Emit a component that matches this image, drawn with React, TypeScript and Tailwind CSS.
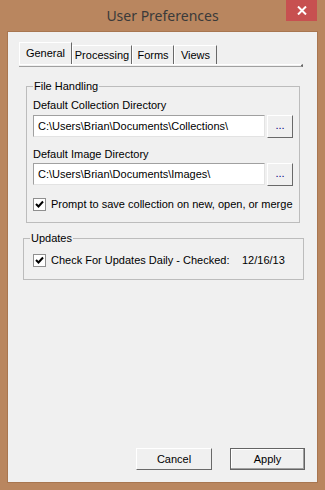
import React from "react";

const ui = { fontFamily: '"Liberation Sans", Arial, sans-serif' };

function CheckBox() {
  return (
    <div className="w-[13px] h-[13px] border border-[#8f8f8f] bg-white flex items-center justify-center shrink-0">
      <svg width="9" height="9" viewBox="0 0 9 9">
        <path d="M1 4 L3.5 6.5 L8 1.5" stroke="#000" strokeWidth="2" fill="none" />
      </svg>
    </div>
  );
}

function PathBox({ value }: { value: string }) {
  return (
    <div className="flex gap-[2px] items-start">
      <div className="w-[232px] h-[22px] bg-white border border-t-[#a0a0a0] border-l-[#a0a0a0] border-b-[#e3e3e3] border-r-[#e3e3e3] flex items-center pl-[4px] text-[11px] text-black">
        {value}
      </div>
      <button className="w-[26px] h-[23px] bg-[#f0f0f0] border border-t-white border-l-white border-b-[#696969] border-r-[#696969] text-[11px] leading-none pb-[2px] text-[#000080]">
        ...
      </button>
    </div>
  );
}

export default function App() {
  const tabs = [
    { name: "General", w: "w-[53px]", active: true },
    { name: "Processing", w: "w-[60px]" },
    { name: "Forms", w: "w-[42px]" },
    { name: "Views", w: "w-[43px]" },
  ];

  return (
    <div className="w-[325px] h-[490px] bg-[#b9865f] flex flex-col" style={ui}>
      {/* title bar */}
      <div className="h-[31px] grid grid-cols-[1fr_auto_1fr] shrink-0">
        <div />
        <div
          className="text-[14px] text-[#3a3a3a] pt-[5px]"
          style={{ fontFamily: '"Noto Sans", "Open Sans", sans-serif' }}
        >
          User Preferences
        </div>
        <div className="flex justify-end pr-[8px]">
          <div className="w-[31px] h-[21px] bg-[#c75050] flex items-center justify-center">
            <svg width="10" height="9" viewBox="0 0 10 9">
              <path d="M1 0.5 L9 8.5 M9 0.5 L1 8.5" stroke="#fff" strokeWidth="2" />
            </svg>
          </div>
        </div>
      </div>

      {/* client area */}
      <div className="flex-1 mx-[7px] mb-[7px] border border-[#a87650] bg-[#f0f0f0] flex flex-col text-[11px] text-black">
        {/* tabs */}
        <div className="ml-[11px] mt-[10px] flex items-end h-[22px]">
          {tabs.map((t) => (
            <div
              key={t.name}
              className={`${t.w} ${
                t.active ? "h-[22px] pt-[3px]" : "h-[19px] pt-[2px]"
              } border-t border-l border-r border-t-white border-l-white border-r-[#696969] bg-[#f0f0f0] text-center leading-[14px]`}
            >
              {t.name}
            </div>
          ))}
        </div>
        <div className="ml-[11px] w-[284px] h-[3px] border-t border-t-white border-b border-b-[#a0a0a0] border-r-2 border-r-[#696969]" />

        {/* file handling */}
        <fieldset className="ml-[18px] mt-[13px] w-[274px] border border-[#bcbcbc] pl-[6px] pr-[6px] pb-[11px]">
          <legend className="px-[1px] leading-[13px]">File Handling</legend>
          <div className="mt-[6px] leading-[13px]">Default Collection Directory</div>
          <div className="mt-[3px]">
            <PathBox value="C:\Users\Brian\Documents\Collections\" />
          </div>
          <div className="mt-[10px] leading-[13px]">Default Image Directory</div>
          <div className="mt-[2px]">
            <PathBox value="C:\Users\Brian\Documents\Images\" />
          </div>
          <div className="mt-[12px] flex items-center gap-[5px] leading-[13px]">
            <CheckBox />
            <span>Prompt to save collection on new, open, or merge</span>
          </div>
        </fieldset>

        {/* updates */}
        <fieldset className="ml-[15px] mt-[9px] w-[281px] border border-[#bcbcbc] pl-[6px] pb-[12px]">
          <legend className="px-[1px] leading-[13px]">Updates</legend>
          <div className="ml-[3px] mt-[9px] flex items-center leading-[13px]">
            <CheckBox />
            <span className="ml-[5px] w-[191px]">Check For Updates Daily - Checked:</span>
            <span>12/16/13</span>
          </div>
        </fieldset>

        <div className="flex-1" />

        {/* buttons */}
        <div className="flex justify-end gap-[18px] mr-[12px] mb-[12px]">
          <button className="w-[76px] h-[22px] bg-[#f0f0f0] border border-t-white border-l-white border-b-[#696969] border-r-[#696969] text-[11px]">
            Cancel
          </button>
          <button className="w-[75px] h-[22px] bg-[#f0f0f0] border border-[#646464] text-[11px] shadow-[inset_-1px_-1px_0_#a0a0a0,inset_1px_1px_0_#fff]">
            Apply
          </button>
        </div>
      </div>
    </div>
  );
}
